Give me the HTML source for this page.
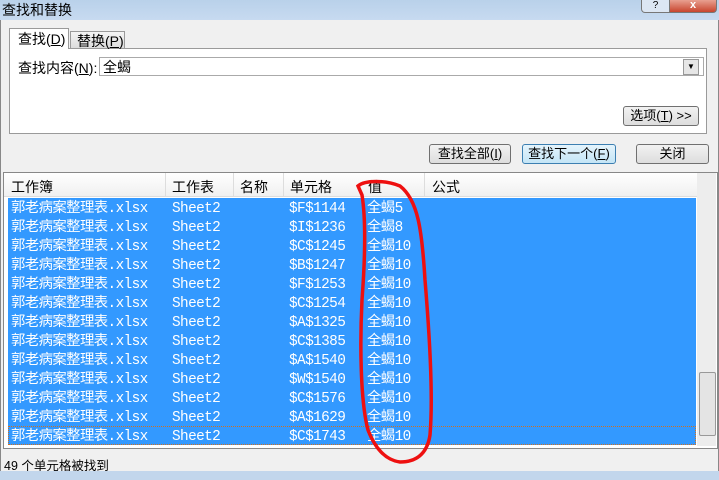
<!DOCTYPE html><html><head><meta charset="utf-8"><style>
body{margin:0;width:719px;height:480px;overflow:hidden;background:#f0f0f0;font-family:"Liberation Sans","Noto Sans CJK SC",sans-serif;font-size:13px;position:relative}
.a{position:absolute}
.title{left:0;top:0;width:719px;height:20px;background:linear-gradient(#b9d1ea,#c7daf0)}
.btn{position:absolute;height:18px;border:1px solid #707070;border-radius:3px;background:linear-gradient(#f2f2f2,#dddddd);font-size:13px;text-align:center;line-height:18px}
.row{position:absolute;left:8px;width:688px;height:19px;color:#fff;line-height:22px}
.row span{position:absolute;font-family:"Liberation Mono","Noto Sans CJK SC",monospace;font-size:14.4px;letter-spacing:-0.6px}
.hd span{position:absolute;top:4px;font-size:14px}
</style></head><body>
<div class="a title"></div>
<div class="a" style="left:2px;top:0px;font-size:14px;color:#000">查找和替换</div>
<div class="a" style="left:641px;top:0;width:27px;height:12px;border:1px solid #777;border-top:0;border-radius:0 0 0 4px;background:#dce6f3;font-size:10px;text-align:center;line-height:11px">?</div>
<div class="a" style="left:669px;top:0;width:46px;height:12px;border:1px solid #777;border-top:0;border-radius:0 0 4px 0;background:linear-gradient(#e8a090,#c8452e);color:#fff;font-size:11px;text-align:center;line-height:11px;font-weight:bold">x</div>
<div class="a" style="left:0;top:20px;width:1px;height:451px;background:#888"></div>
<div class="a" style="left:718px;top:20px;width:1px;height:451px;background:#888"></div>
<div class="a" style="left:9px;top:48px;width:696px;height:84px;border:1px solid #9a9a9a;background:#fff"></div>
<div class="a" style="left:9px;top:28px;width:60px;height:21px;border:1px solid #9a9a9a;border-bottom:0;background:#fff;font-size:14px;line-height:21px;padding-left:8px;box-sizing:border-box">查找(<u>D</u>)</div>
<div class="a" style="left:70px;top:31px;width:55px;height:17px;border:1px solid #9a9a9a;border-bottom:0;background:linear-gradient(#f4f4f4,#dcdcdc);font-size:14px;line-height:18px;padding-left:6px;box-sizing:border-box">替换(<u>P</u>)</div>
<div class="a" style="left:18px;top:58px;font-size:14px">查找内容(<u>N</u>):</div>
<div class="a" style="left:99px;top:57px;width:600px;height:17px;border:1px solid #aaa;background:#fff;padding-left:3px;line-height:18px;font-size:14px">全蝎</div>
<div class="a" style="left:683px;top:59px;width:14px;height:14px;background:#e6e6e6;border:1px solid #999;font-size:8px;text-align:center;line-height:14px">▼</div>
<div class="btn" style="left:623px;top:106px;width:74px">选项(<u>T</u>) &gt;&gt;</div>
<div class="btn" style="left:429px;top:144px;width:80px">查找全部(<u>I</u>)</div>
<div class="btn" style="left:522px;top:144px;width:92px;border-color:#3c7fb1;background:linear-gradient(#e5f4fc,#c4e5f6)">查找下一个(<u>F</u>)</div>
<div class="btn" style="left:636px;top:144px;width:71px">关闭</div>
<div class="a" style="left:3px;top:172px;width:713px;height:275px;border:1px solid #888;background:#fff"></div>
<div class="a hd" style="left:4px;top:173px;width:693px;height:23px;background:linear-gradient(#fff,#f0f0f0);border-bottom:1px solid #ddd">
<span style="left:7px">工作簿</span><span style="left:168px">工作表</span><span style="left:236px">名称</span><span style="left:286px">单元格</span><span style="left:364px">值</span><span style="left:428px">公式</span>
<i class="a" style="left:161px;top:0;width:1px;height:23px;background:#ddd"></i><i class="a" style="left:229px;top:0;width:1px;height:23px;background:#ddd"></i><i class="a" style="left:279px;top:0;width:1px;height:23px;background:#ddd"></i><i class="a" style="left:420px;top:0;width:1px;height:23px;background:#ddd"></i></div>
<div class="a" style="left:697px;top:173px;width:19px;height:273px;background:#ededed"></div>
<div class="a" style="left:699px;top:372px;width:15px;height:62px;border:1px solid #999;border-radius:2px;background:#e4e4e4"></div>
<div class="a" style="left:8px;top:198px;width:688px;height:247px;background:#3399ff"></div>
<div class="row" style="top:198px"><span style="left:3px">郭老病案整理表.xlsx</span><span style="left:164px">Sheet2</span><span style="left:281px">$F$1144</span><span style="left:359px">全蝎5</span></div>
<div class="row" style="top:217px"><span style="left:3px">郭老病案整理表.xlsx</span><span style="left:164px">Sheet2</span><span style="left:281px">$I$1236</span><span style="left:359px">全蝎8</span></div>
<div class="row" style="top:236px"><span style="left:3px">郭老病案整理表.xlsx</span><span style="left:164px">Sheet2</span><span style="left:281px">$C$1245</span><span style="left:359px">全蝎10</span></div>
<div class="row" style="top:255px"><span style="left:3px">郭老病案整理表.xlsx</span><span style="left:164px">Sheet2</span><span style="left:281px">$B$1247</span><span style="left:359px">全蝎10</span></div>
<div class="row" style="top:274px"><span style="left:3px">郭老病案整理表.xlsx</span><span style="left:164px">Sheet2</span><span style="left:281px">$F$1253</span><span style="left:359px">全蝎10</span></div>
<div class="row" style="top:293px"><span style="left:3px">郭老病案整理表.xlsx</span><span style="left:164px">Sheet2</span><span style="left:281px">$C$1254</span><span style="left:359px">全蝎10</span></div>
<div class="row" style="top:312px"><span style="left:3px">郭老病案整理表.xlsx</span><span style="left:164px">Sheet2</span><span style="left:281px">$A$1325</span><span style="left:359px">全蝎10</span></div>
<div class="row" style="top:331px"><span style="left:3px">郭老病案整理表.xlsx</span><span style="left:164px">Sheet2</span><span style="left:281px">$C$1385</span><span style="left:359px">全蝎10</span></div>
<div class="row" style="top:350px"><span style="left:3px">郭老病案整理表.xlsx</span><span style="left:164px">Sheet2</span><span style="left:281px">$A$1540</span><span style="left:359px">全蝎10</span></div>
<div class="row" style="top:369px"><span style="left:3px">郭老病案整理表.xlsx</span><span style="left:164px">Sheet2</span><span style="left:281px">$W$1540</span><span style="left:359px">全蝎10</span></div>
<div class="row" style="top:388px"><span style="left:3px">郭老病案整理表.xlsx</span><span style="left:164px">Sheet2</span><span style="left:281px">$C$1576</span><span style="left:359px">全蝎10</span></div>
<div class="row" style="top:407px"><span style="left:3px">郭老病案整理表.xlsx</span><span style="left:164px">Sheet2</span><span style="left:281px">$A$1629</span><span style="left:359px">全蝎10</span></div>
<div class="row" style="top:426px;outline:1px dotted #d07020;outline-offset:-1px"><span style="left:3px">郭老病案整理表.xlsx</span><span style="left:164px">Sheet2</span><span style="left:281px">$C$1743</span><span style="left:359px">全蝎10</span></div>
<div class="a" style="left:4px;top:455px;font-size:12.5px">49 个单元格被找到</div>
<div class="a" style="left:0;top:471px;width:719px;height:9px;background:#c2d6ec"></div>
<svg class="a" style="left:0;top:0" width="719" height="480"><path d="M358 186 C365 180 385 180 400 186 C418 200 422 230 425 280 C430 340 433 400 430 435 C427 455 415 462 400 462 C385 460 375 448 368 430 C360 400 360 340 362 300 C365 260 366 220 362 195 Z" fill="none" stroke="#ee1010" stroke-width="3.5"/></svg>
</body></html>
